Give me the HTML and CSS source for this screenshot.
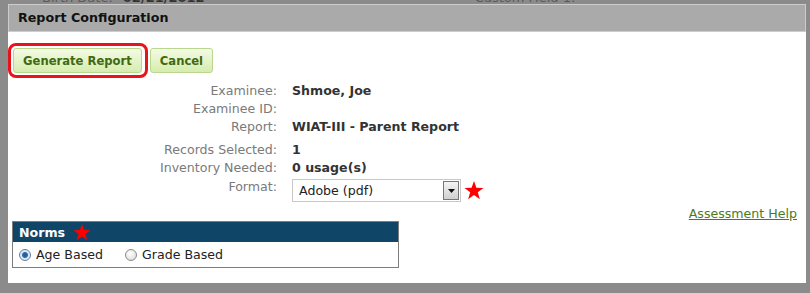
FILE: index.html
```html
<!DOCTYPE html>
<html lang="en">
<head>
  <meta charset="UTF-8" />
  <title>Report Configuration</title>
  <link rel="stylesheet" href="styles.css">
</head>
<body>
  <div class="page-behind">
    <span class="bg-label">Birth Date:</span><span class="bg-value">02/21/2012</span>
    <span class="bg-label bg-custom">Custom Field 1:</span>
  </div>

  <div class="dialog">
    <div class="dialog-title">Report Configuration</div>

    <div class="dialog-body">
      <div class="button-row">
        <span class="highlight">
          <button class="btn">Generate Report</button>
        </span>
        <button class="btn">Cancel</button>
      </div>

      <div class="info-grid">
        <div class="label">Examinee:</div>
        <div class="value">Shmoe, Joe</div>

        <div class="label">Examinee ID:</div>
        <div class="value"></div>

        <div class="label">Report:</div>
        <div class="value">WIAT-III - Parent Report</div>

        <div class="label spaced">Records Selected:</div>
        <div class="value spaced">1</div>

        <div class="label">Inventory Needed:</div>
        <div class="value">0 usage(s)</div>

        <div class="label format-label">Format:</div>
        <div class="value format-value">
          <div class="select">
            <span class="select-text">Adobe (pdf)</span>
            <span class="select-arrow">
              <svg width="7" height="4" viewBox="0 0 7 4"><polygon points="0,0 7,0 3.5,4" fill="#111"/></svg>
            </span>
          </div>
          <svg class="star" width="20" height="19" viewBox="0 0 20 19">
            <polygon points="10,0 12.4,6.8 19.5,6.9 13.8,11.2 15.9,18.3 10,14.1 4.1,18.3 6.2,11.2 0.5,6.9 7.6,6.8" fill="#f00"/>
          </svg>
        </div>
      </div>

      <div class="help-row">
        <a class="help-link" href="#">Assessment Help</a>
      </div>

      <div class="norms">
        <div class="norms-head">
          <span>Norms</span>
          <svg class="star" width="18" height="17" viewBox="0 0 20 19">
            <polygon points="10,0 12.4,6.8 19.5,6.9 13.8,11.2 15.9,18.3 10,14.1 4.1,18.3 6.2,11.2 0.5,6.9 7.6,6.8" fill="#f00"/>
          </svg>
        </div>
        <div class="norms-options">
          <label class="radio"><span class="dot checked"></span>Age Based</label>
          <label class="radio"><span class="dot"></span>Grade Based</label>
        </div>
      </div>
    </div>
  </div>
</body>
</html>
```

FILE: styles.css
```css
* {
  box-sizing: border-box;
  margin: 0;
  padding: 0;
}

body {
  width: 810px;
  height: 293px;
  overflow: hidden;
  position: relative;
  background-color: #8b8b8b;
  font-family: Verdana, "DejaVu Sans", sans-serif;
  font-size: 12.6px;
}

.page-behind {
  display: flex;
  margin-top: -9px;
  padding-left: 42px;
  line-height: 13px;
  font-size: 13px;
  color: #444;
}

.bg-label {
  color: #5a5a5a;
}

.bg-value {
  margin-left: 10px;
  font-weight: bold;
  color: #333;
}

.bg-custom {
  margin-left: 270px;
}

/* modal dialog sits over the dimmed page */
.dialog {
  position: absolute;
  left: 8px;
  top: 4px;
  width: 798px;
  height: 279px;
  background-color: #fff;
}

.dialog-title {
  height: 28px;
  background-color: #aaa;
  border: 1px solid #cdcdcd;
  padding-left: 9px;
  line-height: 26px;
  font-size: 12.7px;
  font-weight: bold;
  color: #111;
}

.dialog-body {
  padding-top: 11px;
}

.button-row {
  display: flex;
  align-items: center;
  gap: 2px;
}

.highlight {
  display: inline-block;
  border: 3px solid #e8141b;
  border-radius: 8px;
  padding: 2px 3px 2px 2px;
}

.btn {
  display: block;
  height: 25px;
  padding: 0 9px;
  background: linear-gradient(#f4fbe4, #d6ecaf);
  border: 1px solid #b9d78f;
  border-radius: 3px;
  font-family: Verdana, "DejaVu Sans", sans-serif;
  font-size: 11.6px;
  font-weight: bold;
  color: #3f6a12;
}

.info-grid {
  display: grid;
  grid-template-columns: 269px 1fr;
  column-gap: 15px;
  margin-top: 4px;
  line-height: 18px;
}

.label {
  text-align: right;
  color: #7a7a7a;
}

.value {
  font-weight: bold;
  color: #333;
  min-height: 18px;
}

.spaced {
  margin-top: 5px;
}

.format-label {
  margin-top: 1px;
}

.format-value {
  display: flex;
  align-items: center;
  gap: 3px;
  margin-top: 2px;
  font-weight: normal;
}

.select {
  display: flex;
  align-items: center;
  justify-content: space-between;
  width: 169px;
  height: 23px;
  border: 1px solid #c8c8c8;
  padding: 1px 1px 1px 6px;
  color: #222;
}

.select-arrow {
  display: flex;
  align-items: center;
  justify-content: center;
  width: 16px;
  height: 19px;
  border: 1px solid #777;
  background: linear-gradient(#f4f4f4, #d0d0d0);
}

.help-row {
  display: flex;
  justify-content: flex-end;
  padding-right: 9px;
  margin-top: 4px;
  line-height: 15px;
}

.help-link {
  color: #4d7a1c;
  text-decoration: underline;
}

.norms {
  width: 387px;
  margin-left: 4px;
  border: 1px solid #7d7d7d;
}

.norms-head {
  display: flex;
  align-items: center;
  gap: 8px;
  height: 20px;
  padding-left: 6px;
  background-color: #0f4668;
  color: #fff;
  font-weight: bold;
}

.norms-options {
  display: flex;
  align-items: center;
  gap: 22px;
  height: 25px;
  padding-left: 6px;
  color: #222;
  font-size: 12.6px;
}

.radio {
  display: flex;
  align-items: center;
  gap: 5px;
}

.dot {
  width: 12px;
  height: 12px;
  border-radius: 50%;
  border: 1px solid #8a8a8a;
  background: radial-gradient(circle at 40% 35%, #fff, #d6d6d6);
}

.dot.checked {
  background: radial-gradient(circle, #1c5a92 0, #2d6fa8 2.5px, #dbe7f2 3.5px, #f2f2f2 6px);
  border-color: #5a7ea0;
}
```
